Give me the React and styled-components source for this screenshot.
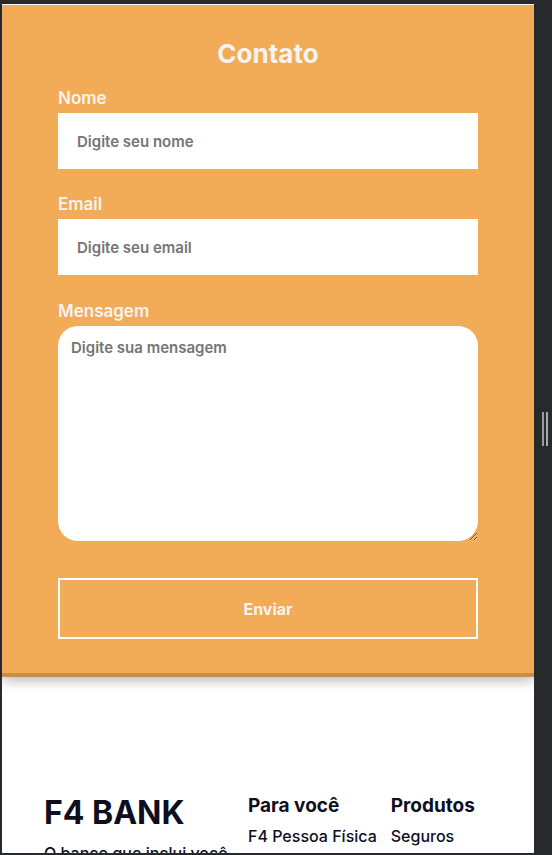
import styled, { createGlobalStyle } from 'styled-components';

const GlobalStyle = createGlobalStyle`
  html, body {
    margin: 0;
    padding: 0;
    background: #28292d;
  }
  body {
    font-family: Inter, "Noto Sans", sans-serif;
  }
  * {
    box-sizing: border-box;
  }
`;

const Frame = styled.div`
  display: flex;
  height: 855px;
  padding: 4px 0 2px 2px;
`;

const Viewport = styled.div`
  width: 532px;
  height: 849px;
  flex-shrink: 0;
  overflow: hidden;
  background: #fff;
  padding-top: 1px;
`;

const Gutter = styled.div`
  flex: 1;
  display: flex;
  align-items: center;
  gap: 2px;
  padding-left: 8px;
`;

const Grip = styled.span`
  width: 2px;
  height: 34px;
  background: ${props => props.$shade};
`;

const ContactSection = styled.section`
  background: #f2ac58;
  padding: 33px 56px 34px;
  box-shadow: 0 4px 0 #c58f4f, 0 7px 12px rgba(0, 0, 0, 0.3);
`;

const Title = styled.h2`
  margin: 0;
  text-align: center;
  font-size: 26px;
  font-weight: 700;
  color: #f7f3f0;
`;

const Form = styled.form`
  display: flex;
  flex-direction: column;
`;

const Field = styled.div`
  display: flex;
  flex-direction: column;
  gap: 5px;
  margin-top: ${props => props.$top}px;
`;

const Label = styled.label`
  font-size: 17px;
  font-weight: 600;
  color: #f7f3f0;
`;

const Input = styled.input`
  height: 56px;
  border: none;
  padding: 0 19px;
  font-family: Inter, "Noto Sans", sans-serif;
  font-size: 15px;
  font-weight: 600;
  color: #333;
  outline: none;

  &::placeholder {
    color: #757575;
  }
`;

const TextArea = styled.textarea`
  display: block;
  height: 215px;
  border: none;
  border-radius: 20px;
  padding: 12px 13px;
  font-family: Inter, "Noto Sans", sans-serif;
  font-size: 15px;
  font-weight: 600;
  color: #333;
  outline: none;

  &::placeholder {
    color: #757575;
  }
`;

const SendButton = styled.button`
  margin-top: 37px;
  height: 61px;
  border: 2px solid #fff;
  background: transparent;
  color: #f7f3f0;
  font-family: Inter, "Noto Sans", sans-serif;
  font-size: 16px;
  font-weight: 700;
  cursor: pointer;
`;

const Footer = styled.footer`
  display: grid;
  grid-template-columns: 190px auto auto;
  justify-content: start;
  column-gap: 14px;
  align-items: start;
  padding: 120px 0 0 42px;
  color: #0e0e1f;
`;

const Brand = styled.div`
  display: flex;
  flex-direction: column;
  gap: 11px;
`;

const BrandName = styled.h1`
  margin: 0;
  font-size: 32px;
  font-weight: 700;
`;

const Tagline = styled.p`
  margin: 0;
  font-size: 16px;
  font-weight: 500;
  white-space: nowrap;
`;

const Column = styled.div`
  display: flex;
  flex-direction: column;
  gap: 9px;
  padding-top: 1px;
`;

const ColumnTitle = styled.h3`
  margin: 0;
  font-size: 19px;
  font-weight: 700;
`;

const ColumnLink = styled.a`
  font-size: 16px;
  font-weight: 500;
  color: inherit;
  text-decoration: none;
  white-space: nowrap;
`;

const App = () => {
  return (
    <>
      <GlobalStyle />
      <Frame>
        <Viewport>
          <ContactSection>
            <Title>Contato</Title>
            <Form onSubmit={e => e.preventDefault()}>
              <Field $top={19}>
                <Label htmlFor="nome">Nome</Label>
                <Input id="nome" type="text" placeholder="Digite seu nome" />
              </Field>
              <Field $top={25}>
                <Label htmlFor="email">Email</Label>
                <Input id="email" type="email" placeholder="Digite seu email" />
              </Field>
              <Field $top={26}>
                <Label htmlFor="mensagem">Mensagem</Label>
                <TextArea id="mensagem" placeholder="Digite sua mensagem" autoFocus />
              </Field>
              <SendButton type="submit">Enviar</SendButton>
            </Form>
          </ContactSection>

          <Footer>
            <Brand>
              <BrandName>F4 BANK</BrandName>
              <Tagline>O banco que inclui você</Tagline>
            </Brand>
            <Column>
              <ColumnTitle>Para você</ColumnTitle>
              <ColumnLink href="#">F4 Pessoa Física</ColumnLink>
            </Column>
            <Column>
              <ColumnTitle>Produtos</ColumnTitle>
              <ColumnLink href="#">Seguros</ColumnLink>
            </Column>
          </Footer>
        </Viewport>
        <Gutter>
          <Grip $shade="#9b9b9b" />
          <Grip $shade="#a8a8a8" />
        </Gutter>
      </Frame>
    </>
  );
};

export default App;
